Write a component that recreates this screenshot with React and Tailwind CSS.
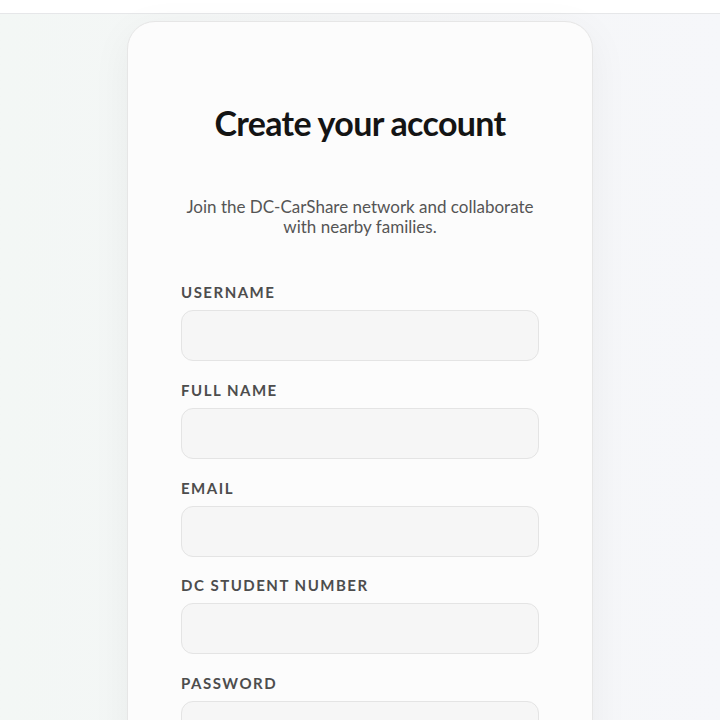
import React, { useState } from "react";

const fields = [
  { key: "username", label: "Username", type: "text" },
  { key: "fullName", label: "Full Name", type: "text" },
  { key: "email", label: "Email", type: "email" },
  { key: "studentNumber", label: "DC Student Number", type: "text" },
  { key: "password", label: "Password", type: "password" },
];

const App = () => {
  const [form, setForm] = useState({});

  const handleChange = (key, value) => {
    setForm({ ...form, [key]: value });
  };

  return (
    <div
      className="min-h-screen flex flex-col bg-gradient-to-r from-[#f3f7f5] via-[#f5f6f7] to-[#f6f7fa]"
      style={{ fontFamily: "Lato, 'Noto Sans', sans-serif" }}
    >
      {/* TOP BAR */}
      <div className="h-[14px] bg-white border-b border-[#e6e7e9]" />

      {/* CARD */}
      <div className="flex justify-center pt-[7px] pb-10">
        <div className="w-[466px] rounded-[28px] border border-[#e6e6e6] bg-[#fcfcfc] shadow-[0_10px_40px_rgba(0,0,0,0.05)] px-[53px] pt-[79px] pb-10">
          <h1 className="text-center text-[34px] leading-[44px] font-bold tracking-[-0.02em] text-[#141414]">
            Create your account
          </h1>

          <p className="mt-[52px] text-center text-[17px] leading-[20px] text-[#555555]">
            Join the DC-CarShare network and collaborate
            <br />
            with nearby families.
          </p>

          <form className="mt-[45px] flex flex-col gap-[18.75px]">
            {fields.map((f) => (
              <div key={f.key} className="flex flex-col gap-[8px]">
                <label className="text-[15px] leading-[20px] font-bold uppercase tracking-[0.1em] text-[#4d4d4d]">
                  {f.label}
                </label>
                <input
                  type={f.type}
                  value={form[f.key] || ""}
                  onChange={(e) => handleChange(f.key, e.target.value)}
                  className="h-[51px] w-full rounded-[12px] border border-[#e4e4e4] bg-[#f6f6f6] px-4 text-[15px] text-[#222] focus:outline-none"
                />
              </div>
            ))}
          </form>
        </div>
      </div>
    </div>
  );
};

export default App;
